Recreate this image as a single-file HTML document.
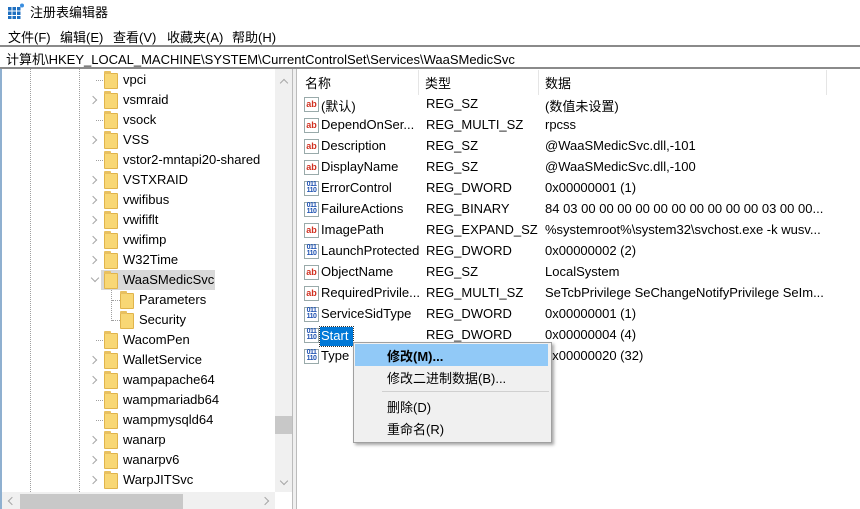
<!DOCTYPE html>
<html><head><meta charset="utf-8"><style>
*{margin:0;padding:0;box-sizing:border-box}
body{width:860px;height:509px;overflow:hidden;background:#fff;font-family:"Liberation Sans","Noto Sans CJK SC",sans-serif;font-size:13px;color:#000;position:relative}
.a{position:absolute;white-space:nowrap}
.fold{position:absolute;width:14px;height:16px;background:#f8d775;border:1px solid #e0b44c;border-radius:1px;z-index:2}
.fold:before{content:"";position:absolute;left:-1px;top:-3px;width:7px;height:3px;background:#e8c060;border-radius:1px 1px 0 0}
.dv{position:absolute;border-left:1px dotted #a0a0a0;width:0}
.dh{position:absolute;border-top:1px dotted #a0a0a0;height:0;width:9px}
.chev{position:absolute;width:6px;height:6px;border-right:1.5px solid #a6a6a6;border-top:1.5px solid #a6a6a6;transform:rotate(45deg)}
.ic{position:absolute;width:15px;height:15px;border:1px solid #9aa;background:#fff;font:bold 9px "Liberation Sans",sans-serif;line-height:12px;text-align:center}
.ab{color:#d03020}
.bn{color:#1c50b0;font-size:7px;line-height:6px;letter-spacing:-0.5px}
</style></head><body>
<svg class="a" style="left:8px;top:3px" width="16" height="16"><g fill="#1f6fc0"><rect x="0" y="4" width="3.5" height="3.5"/><rect x="4.5" y="4" width="3.5" height="3.5"/><rect x="9" y="4" width="3.5" height="3.5"/><rect x="0" y="8.5" width="3.5" height="3.5"/><rect x="4.5" y="8.5" width="3.5" height="3.5"/><rect x="9" y="8.5" width="3.5" height="3.5"/><rect x="0" y="13" width="3.5" height="3"/><rect x="4.5" y="13" width="3.5" height="3"/><rect x="9" y="13" width="3.5" height="3"/></g><circle cx="14" cy="2.5" r="2" fill="#3a8ee0"/></svg>
<div class="a" style="left:30px;top:2px;font-size:13px">注册表编辑器</div>
<div class="a" style="left:8px;top:27px">文件(F)</div>
<div class="a" style="left:60px;top:27px">编辑(E)</div>
<div class="a" style="left:113px;top:27px">查看(V)</div>
<div class="a" style="left:167px;top:27px">收藏夹(A)</div>
<div class="a" style="left:232px;top:27px">帮助(H)</div>
<div class="a" style="left:0;top:45px;width:860px;height:24px;border-top:2px solid #8a8a8a;border-bottom:2px solid #8a8a8a"></div>
<div class="a" style="left:6px;top:49px">计算机\HKEY_LOCAL_MACHINE\SYSTEM\CurrentControlSet\Services\WaaSMedicSvc</div>
<div class="a" style="left:0;top:69px;width:2px;height:440px;background:#8fb0d0"></div>
<div class="a" style="left:101px;top:270px;width:114px;height:20px;background:#d9d9d9"></div>
<div class="dv" style="left:30px;top:69px;height:423px"></div>
<div class="dv" style="left:79px;top:69px;height:423px"></div>
<div class="dv" style="left:111px;top:290px;height:31px"></div>
<div id="tree"></div>
<div class="a" style="left:275px;top:69px;width:17px;height:423px;background:#f0f0f0;z-index:3"></div>
<div class="chev" style="left:281px;top:80px;transform:rotate(-45deg);z-index:4"></div>
<div class="a" style="left:275px;top:416px;width:17px;height:18px;background:#c8c8c8;z-index:4"></div>
<div class="chev" style="left:281px;top:478px;transform:rotate(135deg);z-index:4"></div>
<div class="a" style="left:292px;top:69px;width:5px;height:440px;background:#f0f0f0;border-left:1px solid #bcbcbc;border-right:1px solid #bcbcbc;z-index:4"></div>
<div class="a" style="left:2px;top:492px;width:273px;height:17px;background:#f0f0f0;z-index:3"></div>
<div class="a" style="left:20px;top:494px;width:163px;height:15px;background:#c8c8c8;z-index:4"></div>
<div class="chev" style="left:9px;top:498px;transform:rotate(-135deg);z-index:4"></div>
<div class="chev" style="left:262px;top:498px;z-index:4"></div>
<div class="a" style="left:305px;top:73px">名称</div>
<div class="a" style="left:425px;top:73px">类型</div>
<div class="a" style="left:545px;top:73px">数据</div>
<div class="a" style="left:418px;top:70px;width:1px;height:25px;background:#e5e5e5"></div>
<div class="a" style="left:538px;top:70px;width:1px;height:25px;background:#e5e5e5"></div>
<div class="a" style="left:826px;top:70px;width:1px;height:25px;background:#e5e5e5"></div>
<div id="list"></div>
<div class="a" style="left:320px;top:327px;width:33px;height:19px;background:#0078d7;outline:1px dotted #333"></div>
<div class="a" style="left:321px;top:328px;color:#fff">Start</div>
<div class="a" style="left:353px;top:342px;width:199px;height:101px;background:#f0f0f0;border:1px solid #a0a0a0;box-shadow:2px 2px 3px rgba(0,0,0,.35)"></div>
<div class="a" style="left:355px;top:344px;width:193px;height:22px;background:#91c9f7"></div>
<div class="a" style="left:387px;top:346px;font-weight:bold">修改(M)...</div>
<div class="a" style="left:387px;top:368px">修改二进制数据(B)...</div>
<div class="a" style="left:382px;top:391px;width:167px;height:1px;background:#d0d0d0"></div>
<div class="a" style="left:387px;top:397px">删除(D)</div>
<div class="a" style="left:387px;top:419px">重命名(R)</div>
<script>
var t=[["vpci",0,0],["vsmraid",1,0],["vsock",0,0],["VSS",1,0],["vstor2-mntapi20-shared",0,0],["VSTXRAID",1,0],["vwifibus",1,0],["vwififlt",1,0],["vwifimp",1,0],["W32Time",1,0],["WaaSMedicSvc",2,0],["Parameters",0,1],["Security",0,1],["WacomPen",0,0],["WalletService",1,0],["wampapache64",1,0],["wampmariadb64",0,0],["wampmysqld64",0,0],["wanarp",1,0],["wanarpv6",1,0],["WarpJITSvc",1,0]];
var h="";t.forEach(function(r,i){var y=70+i*20;var fx=r[2]?120:104,tx=r[2]?139:123;
if(r[1]==1)h+='<div class="chev" style="left:90px;top:'+(y+7)+'px"></div>';
else if(r[1]==2)h+='<div class="chev" style="left:92px;top:'+(y+5)+'px;transform:rotate(135deg)"></div>';
else h+='<div class="dh" style="left:'+(r[2]?112:96)+'px;top:'+(y+10)+'px;width:'+(r[2]?8:7)+'px"></div>';
h+='<div class="fold" style="left:'+fx+'px;top:'+(y+3)+'px"></div><div class="a" style="left:'+tx+'px;top:'+(y+2)+'px;z-index:2">'+r[0]+'</div>';});
document.getElementById("tree").innerHTML=h;
var l=[["(默认)","REG_SZ","(数值未设置)",0],["DependOnSer...","REG_MULTI_SZ","rpcss",0],["Description","REG_SZ","@WaaSMedicSvc.dll,-101",0],["DisplayName","REG_SZ","@WaaSMedicSvc.dll,-100",0],["ErrorControl","REG_DWORD","0x00000001 (1)",1],["FailureActions","REG_BINARY","84 03 00 00 00 00 00 00 00 00 00 00 03 00 00...",1],["ImagePath","REG_EXPAND_SZ","%systemroot%\\system32\\svchost.exe -k wusv...",0],["LaunchProtected","REG_DWORD","0x00000002 (2)",1],["ObjectName","REG_SZ","LocalSystem",0],["RequiredPrivile...","REG_MULTI_SZ","SeTcbPrivilege SeChangeNotifyPrivilege SeIm...",0],["ServiceSidType","REG_DWORD","0x00000001 (1)",1],["Start","REG_DWORD","0x00000004 (4)",1],["Type","REG_DWORD","0x00000020 (32)",1]];
h="";l.forEach(function(r,i){var y=95+i*21;
h+='<div class="ic '+(r[3]?'bn':'ab')+'" style="left:304px;top:'+(y+2)+'px">'+(r[3]?'011<br>110':'ab')+'</div>';
if(r[0]!="Start")h+='<div class="a" style="left:321px;top:'+(y+1)+'px">'+r[0]+'</div>';
h+='<div class="a" style="left:426px;top:'+(y+1)+'px">'+r[1]+'</div><div class="a" style="left:545px;top:'+(y+1)+'px">'+r[2]+'</div>';});
document.getElementById("list").innerHTML=h;
</script>
</body></html>
